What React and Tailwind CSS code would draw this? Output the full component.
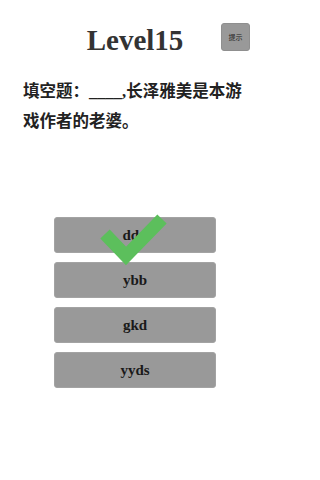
import React from "react";

const options = ["ddd", "ybb", "gkd", "yyds"];

export default function App() {
  return (
    <div className="w-[270px] h-[480px] bg-white text-[#222] font-['Liberation_Serif','Noto_Sans_CJK_SC',serif]">
      {/* Header */}
      <div className="grid grid-cols-[1fr_auto_1fr] items-start pt-[23px]">
        <div />
        <h1 className="mt-[3px] text-[29px] leading-[28px] font-bold text-[#333]">Level15</h1>
        <div className="flex justify-end pr-[20px]">
          <button className="w-[29px] h-[28px] rounded-[3px] bg-[#999] border border-[#8f8f8f] text-[7px] leading-none text-[#222] font-['Noto_Sans_CJK_SC',sans-serif]">
            提示
          </button>
        </div>
      </div>

      {/* Question */}
      <p className="mt-[23px] pl-[23px] pr-[20px] text-[16.5px] leading-[30px] font-bold text-[#222]">
        填空题：____,长泽雅美是本游戏作者的老婆。
      </p>

      {/* Options */}
      <div className="relative mt-[80px] flex flex-col items-center gap-[9px]">
        {options.map((opt) => (
          <button
            key={opt}
            className="w-[162px] h-[36px] rounded-[3px] bg-[#999] border border-[#a3a3a3] text-[15px] font-bold text-[#1a1a1a]"
          >
            {opt}
          </button>
        ))}
        <svg
          className="absolute left-0 top-[-217px] pointer-events-none"
          width="270"
          height="480"
          viewBox="0 0 270 480"
        >
          <polyline
            points="105,234 126,256 162,219"
            fill="none"
            stroke="#5cbf5c"
            strokeWidth="13"
            strokeLinejoin="miter"
          />
        </svg>
      </div>
    </div>
  );
}
